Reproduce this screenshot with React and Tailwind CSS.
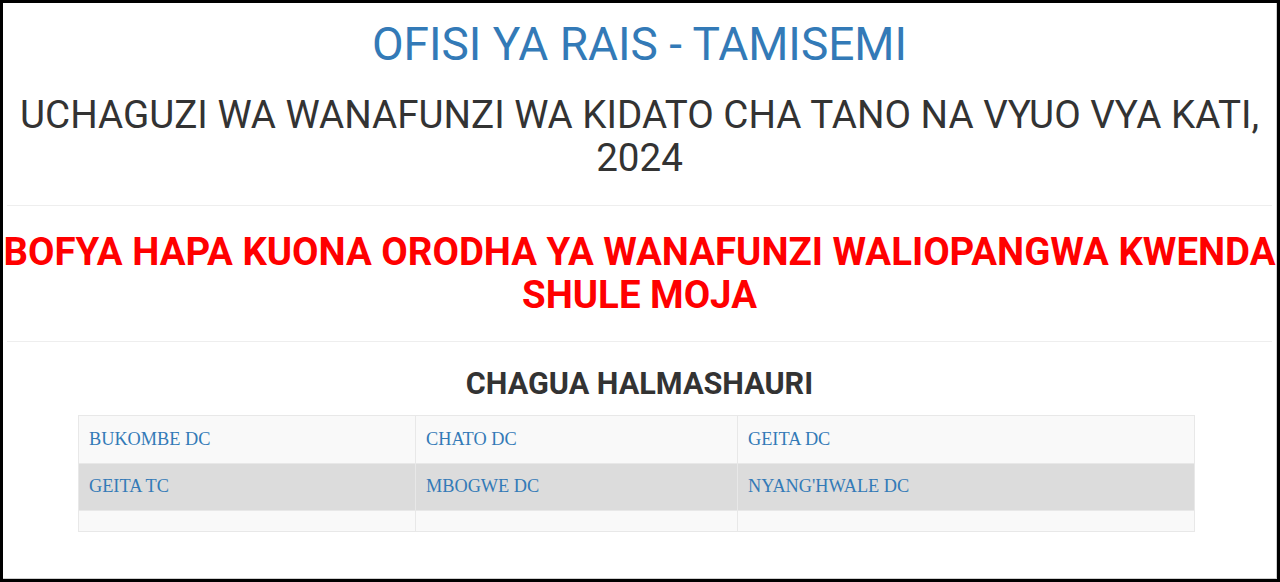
const ROWS = [
  ['BUKOMBE DC', 'CHATO DC', 'GEITA DC'],
  ['GEITA TC', 'MBOGWE DC', "NYANG'HWALE DC"],
  ['', '', ''],
]

const ROW_BG = ['bg-[#f9f9f9]', 'bg-[#dcdcdc]', 'bg-[#f9f9f9]']
const ROW_H = ['h-[48px]', 'h-[47px]', 'h-[21px]']

export default function App() {
  return (
    <div className="h-[582px] w-[1280px] overflow-hidden border-[3px] border-black bg-white font-['Roboto',sans-serif]">
      <div className="h-full border-r border-b border-[#cfcfcf] px-1">
        <h1 className="pt-[16px] text-center text-[46px] leading-[50px] text-[#337ab7]">
          OFISI YA RAIS - TAMISEMI
        </h1>
        <h2 className="mt-[24px] text-center text-[38.6px] leading-[43px] text-[#333]">
          UCHAGUZI WA WANAFUNZI WA KIDATO CHA TANO NA VYUO VYA KATI, 2024
        </h2>
        <hr className="mt-[26px] border-t border-[#eee]" />
        <p className="-mx-[6px] mt-[24px] text-center text-[38.4px] font-bold leading-[43px] text-[#ff0000]">
          BOFYA HAPA KUONA ORODHA YA WANAFUNZI WALIOPANGWA KWENDA SHULE MOJA
        </p>
        <hr className="mt-[25px] border-t border-[#eee]" />
        <h3 className="mt-[25px] text-center text-[30.6px] font-bold leading-[34px] text-[#333]">
          CHAGUA HALMASHAURI
        </h3>
        <table className="ml-[71px] mt-[14px] w-[1117px] border-collapse font-['Liberation_Serif',serif] text-[18.3px]">
          <tbody>
            {ROWS.map((row, i) => (
              <tr key={i} className={`${ROW_BG[i]} ${ROW_H[i]}`}>
                {row.map((cell, j) => (
                  <td
                    key={j}
                    className={`border border-[#e8e8e8] px-[10px] py-0 align-middle text-[#337ab7] ${
                      j === 0 ? 'w-[337px]' : j === 1 ? 'w-[322px]' : ''
                    }`}
                  >
                    {cell}
                  </td>
                ))}
              </tr>
            ))}
          </tbody>
        </table>
      </div>
    </div>
  )
}
